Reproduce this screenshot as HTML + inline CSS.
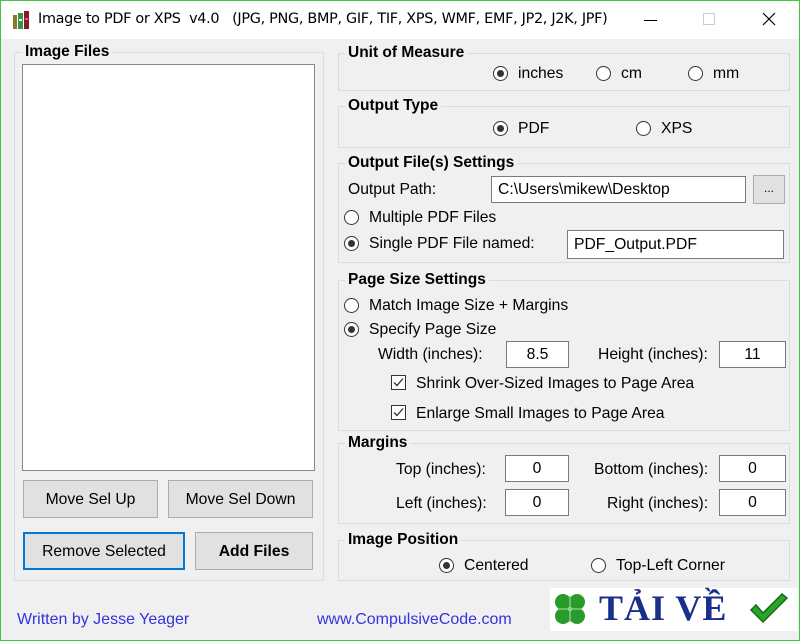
<!DOCTYPE html>
<html><head><meta charset="utf-8"><style>
*{box-sizing:border-box;margin:0;padding:0}
body{width:800px;height:641px;background:#f0f0f0;font-family:"Liberation Sans",sans-serif;font-size:15.7px;color:#000;position:relative;overflow:hidden}
.win{position:absolute;left:0;top:0;width:800px;height:641px;border:1px solid #3fc83f}
.a{position:absolute;white-space:nowrap}
.l{padding-top:1px}
.title{position:absolute;left:1px;top:1px;width:798px;height:38px;background:#fff}
.g{position:absolute;border:1px solid #dcdcdc}
.gt{position:absolute;background:#f0f0f0;font-weight:bold;padding:0 3px;white-space:nowrap;font-size:15.5px}
.r{position:absolute;width:15px;height:15px;border:1px solid #333;border-radius:50%;background:#fff}
.r.on::after{content:"";position:absolute;left:3px;top:3px;width:7px;height:7px;border-radius:50%;background:#333}
.in{position:absolute;background:#fff;border:1px solid #7a7a7a;padding-left:6px;line-height:25px;white-space:nowrap}
.c{text-align:center;padding:0}
.btn{position:absolute;background:#e1e1e1;border:1px solid #adadad;text-align:center;white-space:nowrap}
.cb{position:absolute;width:15px;height:15px;border:1px solid #333;background:#fff}
.cb svg{position:absolute;left:1px;top:1px}
</style></head><body>
<div class="win"></div>
<div class="title"></div>
<svg class="a" style="left:11px;top:9px" width="22" height="22" viewBox="0 0 22 22">
<rect x="2" y="6" width="4" height="14" fill="#8a7a30"/><rect x="7" y="4" width="5" height="16" fill="#2a9a3a"/><rect x="13" y="2" width="5" height="18" fill="#8a1a2a"/>
<rect x="8" y="10" width="3" height="2" fill="#fff"/><rect x="14" y="9" width="3" height="2" fill="#f4a"/></svg>
<div class="a" style="left:38px;top:11px;font-size:14.4px;font-family:'DejaVu Sans','Liberation Sans',sans-serif;letter-spacing:-0.3px">Image to PDF or XPS &nbsp;v4.0 &nbsp;&nbsp;(JPG, PNG, BMP, GIF, TIF, XPS, WMF, EMF, JP2, J2K, JPF)</div>
<div class="a" style="left:644px;top:20px;width:13px;height:1px;background:#000"></div>
<div class="a" style="left:703px;top:13px;width:12px;height:12px;border:1px solid #ccc"></div>
<svg class="a" style="left:762px;top:12px" width="14" height="14"><path d="M1 1L13 13M13 1L1 13" stroke="#000" stroke-width="1.2"/></svg>

<div class="g" style="left:14px;top:52px;width:310px;height:529px"></div>
<div class="gt" style="left:22px;top:43px">Image Files</div>
<div class="a" style="left:22px;top:64px;width:293px;height:407px;background:#fff;border:1px solid #828790"></div>
<div class="btn" style="left:23px;top:480px;width:135px;height:38px;line-height:37px">Move Sel Up</div>
<div class="btn" style="left:168px;top:480px;width:145px;height:38px;line-height:37px">Move Sel Down</div>
<div class="btn" style="left:23px;top:532px;width:162px;height:38px;line-height:35px;border:2px solid #0078d7">Remove Selected</div>
<div class="btn" style="left:195px;top:532px;width:118px;height:38px;line-height:37px;font-weight:bold">Add Files</div>

<div class="g" style="left:338px;top:53px;width:452px;height:38px"></div>
<div class="gt" style="left:345px;top:44px">Unit of Measure</div>
<div class="r on" style="left:493px;top:66px"></div><div class="a l" style="left:518px;top:64px">inches</div>
<div class="r" style="left:596px;top:66px"></div><div class="a l" style="left:621px;top:64px">cm</div>
<div class="r" style="left:688px;top:66px"></div><div class="a l" style="left:713px;top:64px">mm</div>

<div class="g" style="left:338px;top:106px;width:452px;height:42px"></div>
<div class="gt" style="left:345px;top:97px">Output Type</div>
<div class="r on" style="left:493px;top:121px"></div><div class="a l" style="left:518px;top:119px">PDF</div>
<div class="r" style="left:636px;top:121px"></div><div class="a l" style="left:661px;top:119px">XPS</div>

<div class="g" style="left:338px;top:163px;width:452px;height:100px"></div>
<div class="gt" style="left:345px;top:154px">Output File(s) Settings</div>
<div class="a l" style="left:348px;top:180px">Output Path:</div>
<div class="in" style="left:491px;top:176px;width:255px;height:27px">C:\Users\mikew\Desktop</div>
<div class="btn" style="left:753px;top:175px;width:32px;height:29px;line-height:24px;font-size:12px">...</div>
<div class="r" style="left:344px;top:210px"></div><div class="a l" style="left:369px;top:208px">Multiple PDF Files</div>
<div class="r on" style="left:344px;top:236px"></div><div class="a l" style="left:369px;top:234px">Single PDF File named:</div>
<div class="in" style="left:567px;top:230px;width:217px;height:29px;line-height:27px">PDF_Output.PDF</div>

<div class="g" style="left:338px;top:280px;width:452px;height:151px"></div>
<div class="gt" style="left:345px;top:271px">Page Size Settings</div>
<div class="r" style="left:344px;top:298px"></div><div class="a l" style="left:369px;top:296px">Match Image Size + Margins</div>
<div class="r on" style="left:344px;top:322px"></div><div class="a l" style="left:369px;top:320px">Specify Page Size</div>
<div class="a l" style="left:378px;top:345px">Width (inches):</div>
<div class="in c" style="left:506px;top:341px;width:63px;height:27px">8.5</div>
<div class="a l" style="left:598px;top:345px">Height (inches):</div>
<div class="in c" style="left:719px;top:341px;width:67px;height:27px">11</div>
<div class="cb" style="left:391px;top:375px"><svg width="11" height="11"><path d="M1 5.5L4 8.5L10 1.5" stroke="#333" stroke-width="1.3" fill="none"/></svg></div>
<div class="a l" style="left:416px;top:374px">Shrink Over-Sized Images to Page Area</div>
<div class="cb" style="left:391px;top:405px"><svg width="11" height="11"><path d="M1 5.5L4 8.5L10 1.5" stroke="#333" stroke-width="1.3" fill="none"/></svg></div>
<div class="a l" style="left:416px;top:404px">Enlarge Small Images to Page Area</div>

<div class="g" style="left:338px;top:443px;width:452px;height:81px"></div>
<div class="gt" style="left:345px;top:434px">Margins</div>
<div class="a l" style="left:396px;top:460px">Top (inches):</div>
<div class="in c" style="left:505px;top:455px;width:64px;height:27px">0</div>
<div class="a l" style="left:594px;top:460px">Bottom (inches):</div>
<div class="in c" style="left:719px;top:455px;width:67px;height:27px">0</div>
<div class="a l" style="left:396px;top:494px">Left (inches):</div>
<div class="in c" style="left:505px;top:489px;width:64px;height:27px">0</div>
<div class="a l" style="left:607px;top:494px">Right (inches):</div>
<div class="in c" style="left:719px;top:489px;width:67px;height:27px">0</div>

<div class="g" style="left:338px;top:540px;width:452px;height:41px"></div>
<div class="gt" style="left:345px;top:531px">Image Position</div>
<div class="r on" style="left:439px;top:558px"></div><div class="a l" style="left:464px;top:556px">Centered</div>
<div class="r" style="left:591px;top:558px"></div><div class="a l" style="left:616px;top:556px">Top-Left Corner</div>

<div class="a" style="left:17px;top:611px;color:#3333e0;font-size:16px">Written by Jesse Yeager</div>
<div class="a" style="left:317px;top:611px;color:#3333e0;font-size:16px">www.CompulsiveCode.com</div>
<div class="a" style="left:550px;top:588px;width:248px;height:43px;background:#fff"></div>
<svg class="a" style="left:550px;top:590px" width="40" height="40" viewBox="0 0 40 40">
<g fill="#2a9a2a"><circle cx="13" cy="12" r="8"/><circle cx="27" cy="12" r="8"/><circle cx="13" cy="26" r="8"/><circle cx="27" cy="26" r="8"/></g>
<path d="M20 6V32M8 19H32" stroke="#7ccf7c" stroke-width="1.5"/></svg>
<div class="a" style="left:599px;top:587px;font-family:'Liberation Serif',serif;font-weight:bold;font-size:36px;color:#1a2f8a;letter-spacing:1px">TẢI VỀ</div>
<svg class="a" style="left:748px;top:592px" width="42" height="36" viewBox="0 0 42 36"><path d="M3 18L15 30L39 6L34 2L15 21L8 13Z" fill="#2aa52a" stroke="#176b17" stroke-width="1.5"/></svg>
</body></html>
